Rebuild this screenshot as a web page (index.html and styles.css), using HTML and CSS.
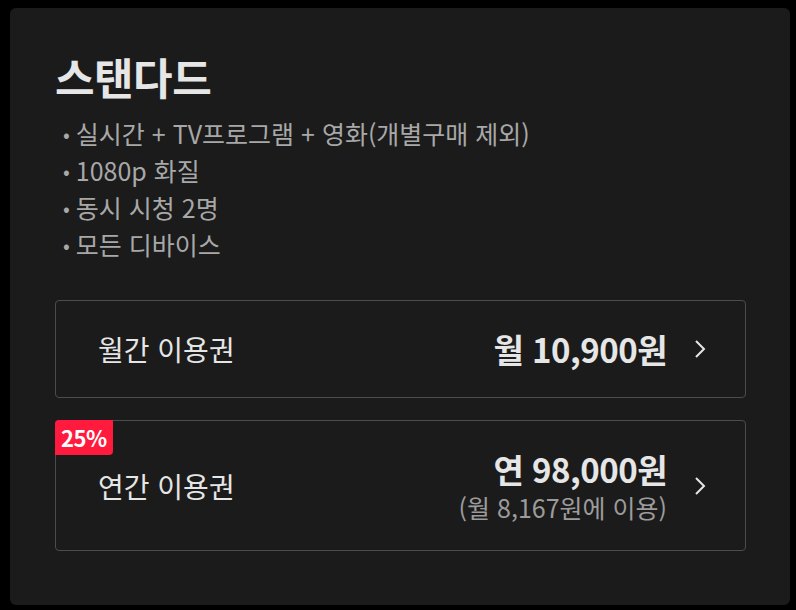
FILE: index.html
```html
<!DOCTYPE html>
<html lang="ko">
<head>
  <meta charset="UTF-8" />
  <meta name="viewport" content="width=device-width, initial-scale=1.0"/>
  <title>스탠다드 이용권</title>
  <link rel="stylesheet" href="styles.css">
</head>
<body>

  <div class="plan">
    <h1>스탠다드</h1>
    <ul class="features">
      <li>실시간 + TV프로그램 + 영화(개별구매 제외)</li>
      <li>1080p 화질</li>
      <li>동시 시청 2명</li>
      <li>모든 디바이스</li>
    </ul>

    <a class="option" href="#">
      <span class="option-name">월간 이용권</span>
      <span class="option-price">
        <strong>월 10,900원</strong>
      </span>
      <svg class="chevron" viewBox="0 0 14 20" width="14" height="20">
        <path d="M3 2 L11 10 L3 18" fill="none" stroke="currentColor" stroke-width="2"/>
      </svg>
    </a>

    <a class="option option-year" href="#">
      <span class="badge">25%</span>
      <span class="option-name">연간 이용권</span>
      <span class="option-price">
        <strong>연 98,000원</strong>
        <small>(월 8,167원에 이용)</small>
      </span>
      <svg class="chevron" viewBox="0 0 14 20" width="14" height="20">
        <path d="M3 2 L11 10 L3 18" fill="none" stroke="currentColor" stroke-width="2"/>
      </svg>
    </a>
  </div>

</body>
</html>
```

FILE: styles.css
```css
body {
  font-family: 'Noto Sans CJK KR', 'Noto Sans', sans-serif;
  background: #000;
  margin: 0;
  padding: 8px 6px 6px 10px;
}
.plan {
  background: #1b1b1b;
  border-radius: 6px;
  padding: 40px 44px 54px 45px;
  color: #e6e6e6;
}
h1 {
  margin: 0;
  font-size: 43px;
  line-height: 56px;
  font-weight: 700;
  letter-spacing: -0.5px;
  color: #e6e6e6;
}
.features {
  list-style: none;
  margin: 11px 0 0;
  padding: 0 0 0 8px;
  color: #a8a8a8;
  font-size: 25px;
  line-height: 37px;
}
.features li::before {
  content: "•";
  font-size: 20px;
  margin-right: 6px;
  vertical-align: 2px;
}
.option {
  position: relative;
  display: flex;
  align-items: center;
  margin-top: 37px;
  height: 96px;
  padding: 0 38px 0 42px;
  border: 1px solid #4c4c4c;
  border-radius: 4px;
  color: #e6e6e6;
  text-decoration: none;
}
.option-year {
  margin-top: 22px;
  height: 129px;
}
.option-name {
  flex: 1;
  font-size: 28px;
}
.option-price {
  display: flex;
  flex-direction: column;
  align-items: flex-end;
}
.option-price strong {
  font-size: 33px;
  font-weight: 700;
  letter-spacing: -0.5px;
  line-height: 42px;
}
.option-price small {
  font-size: 25px;
  color: #9c9c9c;
  line-height: 34px;
}
.chevron {
  margin-left: 26px;
  color: #e6e6e6;
}
.badge {
  position: absolute;
  left: -1px;
  top: -1px;
  background: #ff1a3e;
  color: #fff;
  font-size: 22px;
  font-weight: 700;
  line-height: 35px;
  padding: 0 6px;
  border-radius: 4px 0 4px 0;
  letter-spacing: -0.5px;
}
```
